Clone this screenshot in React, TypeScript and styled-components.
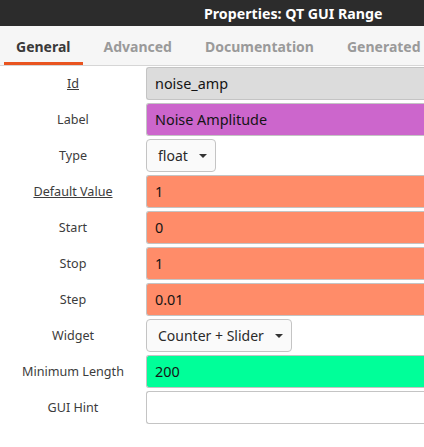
import React from "react";
import styled, { createGlobalStyle } from "styled-components";

const Global = createGlobalStyle`
  html, body { margin: 0; padding: 0; background: #ffffff; }
  body { font-family: "Noto Sans", "Open Sans", sans-serif; overflow: hidden; }
`;

const Window = styled.div`
  width: 424px;
  height: 447px;
  overflow: hidden;
  background: #ffffff;
  display: flex;
  flex-direction: column;
`;

const TitleBar = styled.div`
  height: 26px;
  background: #2c2c2c;
  color: #ffffff;
  font-weight: 700;
  font-size: 14.2px;
  display: flex;
  align-items: center;
  padding-left: 204px;
  white-space: nowrap;
  flex-shrink: 0;
`;

const TabBar = styled.div`
  height: 39px;
  background: #f6f6f6;
  border-bottom: 1px solid #d6d6d6;
  display: flex;
  align-items: stretch;
  gap: 9px;
  padding-left: 4px;
  flex-shrink: 0;
  white-space: nowrap;
`;

const Tab = styled.div<{ $active?: boolean }>`
  padding: 0 12px;
  display: flex;
  align-items: center;
  font-size: 14px;
  font-weight: 700;
  color: ${(p) => (p.$active ? "#3a3a3a" : "#9a9a9a")};
  box-shadow: ${(p) => (p.$active ? "inset 0 -3px 0 #e95420" : "none")};
  padding-top: 2px;
`;

const Form = styled.div`
  display: grid;
  grid-template-columns: 146px 300px;
  grid-auto-rows: 33px;
  row-gap: 3px;
  padding-top: 1px;
`;

const Label = styled.div<{ $underline?: boolean }>`
  display: flex;
  align-items: center;
  justify-content: center;
  font-size: 12.6px;
  color: #3c3c3c;
  text-decoration: ${(p) => (p.$underline ? "underline" : "none")};
  white-space: nowrap;
`;

const Field = styled.div<{ $bg: string }>`
  box-sizing: border-box;
  height: 33px;
  background: ${(p) => p.$bg};
  border: 1px solid #c4c4c4;
  border-right: none;
  border-radius: 3px 0 0 3px;
  display: flex;
  align-items: center;
  padding-left: 8px;
  font-size: 14.4px;
  color: #141414;
  white-space: nowrap;
`;

const DropButton = styled.div`
  box-sizing: border-box;
  justify-self: start;
  height: 33px;
  background: #fafafa;
  border: 1px solid #c4c4c4;
  border-radius: 4px;
  display: flex;
  align-items: center;
  gap: 11px;
  padding: 0 8px 0 11px;
  font-size: 14px;
  color: #2a2a2a;
  white-space: nowrap;
`;

const Caret = styled.span`
  width: 0;
  height: 0;
  border-left: 4.5px solid transparent;
  border-right: 4.5px solid transparent;
  border-top: 4.5px solid #333333;
  margin-top: 1px;
`;

type Row =
  | { label: string; underline?: boolean; kind: "field"; value: string; bg: string }
  | { label: string; underline?: boolean; kind: "drop"; value: string };

const rows: Row[] = [
  { label: "Id", underline: true, kind: "field", value: "noise_amp", bg: "#dcdcdc" },
  { label: "Label", kind: "field", value: "Noise Amplitude", bg: "#cc66cc" },
  { label: "Type", kind: "drop", value: "float" },
  { label: "Default Value", underline: true, kind: "field", value: "1", bg: "#ff8c69" },
  { label: "Start", kind: "field", value: "0", bg: "#ff8c69" },
  { label: "Stop", kind: "field", value: "1", bg: "#ff8c69" },
  { label: "Step", kind: "field", value: "0.01", bg: "#ff8c69" },
  { label: "Widget", kind: "drop", value: "Counter + Slider" },
  { label: "Minimum Length", kind: "field", value: "200", bg: "#00ff99" },
  { label: "GUI Hint", kind: "field", value: "", bg: "#ffffff" },
];

export default function App() {
  return (
    <Window>
      <Global />
      <TitleBar>Properties: QT GUI Range</TitleBar>
      <TabBar>
        <Tab $active>General</Tab>
        <Tab>Advanced</Tab>
        <Tab>Documentation</Tab>
        <Tab>Generated</Tab>
      </TabBar>
      <Form>
        {rows.map((r) => (
          <React.Fragment key={r.label}>
            <Label $underline={r.underline}>{r.label}</Label>
            {r.kind === "field" ? (
              <Field $bg={r.bg}>{r.value}</Field>
            ) : (
              <DropButton>
                {r.value}
                <Caret />
              </DropButton>
            )}
          </React.Fragment>
        ))}
      </Form>
    </Window>
  );
}
